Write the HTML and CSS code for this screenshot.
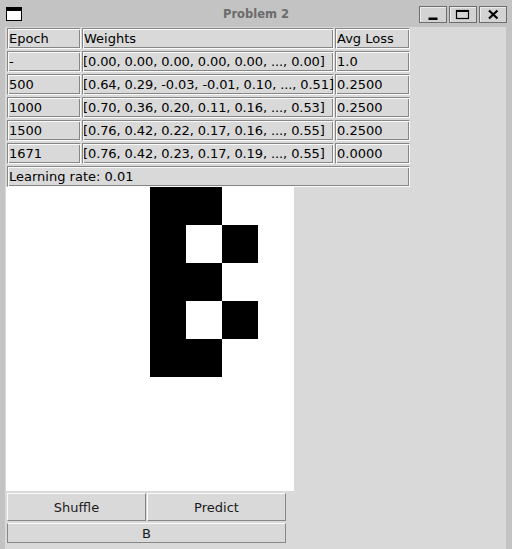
FILE: index.html
```html
<!DOCTYPE html>
<html>
<head>
<meta charset="utf-8">
<link rel="stylesheet" href="styles.css">
</head>
<body>
<div class="window">
  <div class="titlebar">
    <div class="wicon"></div>
    <div class="title">Problem 2</div>
    <div class="wbtns">
      <div class="wbtn"><svg width="26" height="15" viewBox="0 0 26 15"><rect x="8.5" y="10.5" width="9" height="2.5" fill="#000"/></svg></div>
      <div class="wbtn"><svg width="26" height="15" viewBox="0 0 26 15"><rect x="6.5" y="3.5" width="12" height="8" fill="none" stroke="#000" stroke-width="1.2"/><rect x="6" y="3" width="13" height="2" fill="#000"/></svg></div>
      <div class="wbtn"><svg width="26" height="15" viewBox="0 0 26 15"><path d="M9 3.5 L17.5 11.5 M17.5 3.5 L9 11.5" stroke="#000" stroke-width="2.2" fill="none"/></svg></div>
    </div>
  </div>
  <div class="frame">
    <div class="content">
      <div class="table">
        <div class="cell">Epoch</div><div class="cell">Weights</div><div class="cell">Avg Loss</div>
        <div class="cell">-</div><div class="cell w">[0.00, 0.00, 0.00, 0.00, 0.00, ..., 0.00]</div><div class="cell">1.0</div>
        <div class="cell">500</div><div class="cell w">[0.64, 0.29, -0.03, -0.01, 0.10, ..., 0.51]</div><div class="cell">0.2500</div>
        <div class="cell">1000</div><div class="cell w">[0.70, 0.36, 0.20, 0.11, 0.16, ..., 0.53]</div><div class="cell">0.2500</div>
        <div class="cell">1500</div><div class="cell w">[0.76, 0.42, 0.22, 0.17, 0.16, ..., 0.55]</div><div class="cell">0.2500</div>
        <div class="cell">1671</div><div class="cell w">[0.76, 0.42, 0.23, 0.17, 0.19, ..., 0.55]</div><div class="cell">0.0000</div>
        <div class="cell lr">Learning rate: 0.01</div>
      </div>
      <div class="canvas">
        <i></i><i></i><i></i><i></i><i class="on"></i><i class="on"></i><i></i><i></i>
        <i></i><i></i><i></i><i></i><i class="on"></i><i></i><i class="on"></i><i></i>
        <i></i><i></i><i></i><i></i><i class="on"></i><i class="on"></i><i></i><i></i>
        <i></i><i></i><i></i><i></i><i class="on"></i><i></i><i class="on"></i><i></i>
        <i></i><i></i><i></i><i></i><i class="on"></i><i class="on"></i><i></i><i></i>
      </div>
      <div class="buttons">
        <div class="btn">Shuffle</div>
        <div class="btn">Predict</div>
        <div class="btn wide">B</div>
      </div>
    </div>
  </div>
</div>
</body>
</html>
```
FILE: styles.css
```css
html, body {
  margin: 0;
  padding: 0;
}
body {
  background: #c3c3c3;
  font-family: "DejaVu Sans", sans-serif;
  font-size: 13px;
  color: #000;
}
.window {
  width: 512px;
  height: 549px;
  display: flex;
  flex-direction: column;
}
.titlebar {
  height: 27px;
  flex: none;
  display: grid;
  grid-template-columns: 1fr auto 1fr;
  align-items: center;
}
.wicon {
  justify-self: start;
  margin-left: 6px;
  margin-top: 1px;
  width: 16px;
  height: 14px;
  box-sizing: border-box;
  border: 1.5px solid #000;
  border-top-width: 4px;
  background: #fff;
}
.title {
  font-weight: bold;
  font-size: 11.5px;
  color: #6b6b6b;
}
.wbtns {
  justify-self: end;
  display: flex;
  gap: 2px;
  margin-right: 5px;
  margin-top: 2px;
}
.wbtn {
  width: 28px;
  height: 17px;
  box-sizing: border-box;
  border: 1px solid #6e6e6e;
  background: #d3d3d3;
  box-shadow: inset 1px 1px 0 #ededed;
  display: flex;
}
.wbtn svg {
  display: block;
}
.frame {
  flex: 1;
  display: flex;
  padding-left: 5px;
  padding-right: 6px;
}
.content {
  flex: 1;
  background: #d9d9d9;
  padding-top: 1px;
  display: flex;
  flex-direction: column;
}
.table {
  display: grid;
  grid-template-columns: 74px 252px 75px;
  column-gap: 1px;
  row-gap: 2px;
  margin-left: 2px;
}
.cell {
  height: 21px;
  box-sizing: border-box;
  border: 1px solid;
  border-color: #868686 #fbfbfb #fbfbfb #868686;
  box-shadow: inset 1px 1px 0 #fbfbfb, inset -1px -1px 0 #868686;
  padding-left: 1px;
  line-height: 19px;
  white-space: nowrap;
}
.cell.w {
  padding-left: 0;
  letter-spacing: -0.1px;
}
.lr {
  grid-column: 1 / -1;
}
.canvas {
  margin-left: 1px;
  width: 288px;
  height: 304px;
  background: #fff;
  display: grid;
  grid-template-columns: repeat(8, 36px);
  grid-auto-rows: 38px;
  align-content: start;
}
.canvas .on {
  background: #000;
}
.buttons {
  margin-top: 2px;
  margin-left: 2px;
  display: grid;
  grid-template-columns: 139px 139px;
  column-gap: 1px;
  row-gap: 2px;
}
.btn {
  height: 28px;
  box-sizing: border-box;
  border: 1px solid;
  border-color: #fbfbfb #868686 #868686 #fbfbfb;
  display: flex;
  align-items: center;
  justify-content: center;
  color: #1a1a1a;
}
.btn.wide {
  grid-column: 1 / -1;
  height: 20px;
  border-color: #fbfbfb #868686 #868686 #868686;
}
```
